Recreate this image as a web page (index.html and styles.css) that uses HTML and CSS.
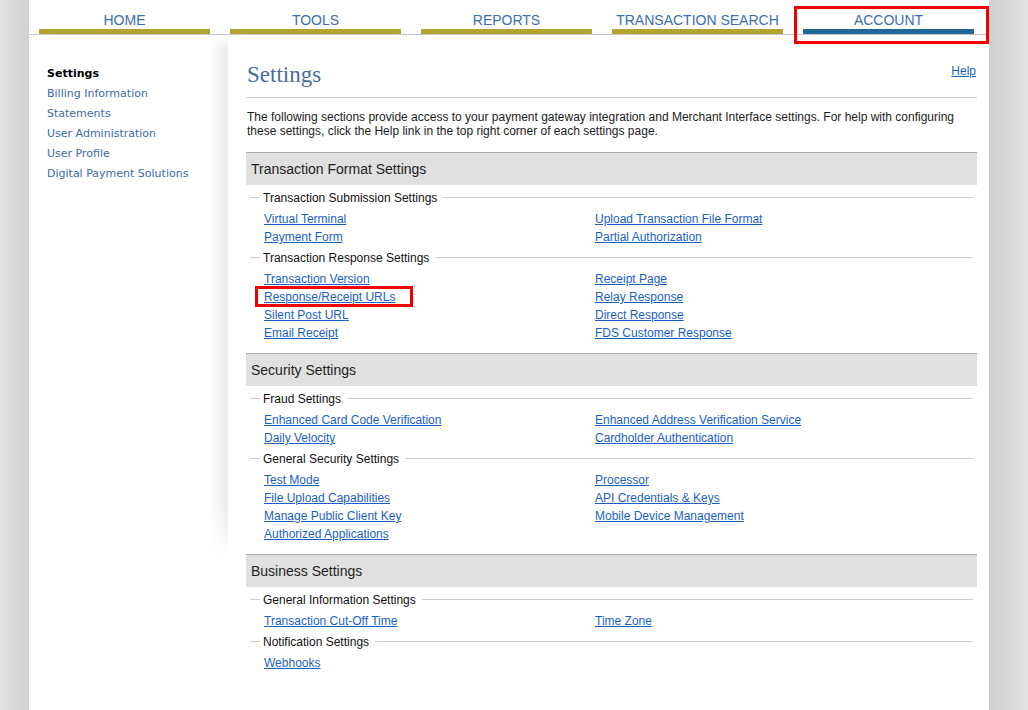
FILE: index.html
```html
<!DOCTYPE html>
<html lang="en">
<head>
<meta charset="utf-8">
<title>Settings</title>
<link rel="stylesheet" href="styles.css">
</head>
<body>
<div class="page">
  <nav class="tabs">
    <a class="tab">HOME</a>
    <a class="tab">TOOLS</a>
    <a class="tab">REPORTS</a>
    <a class="tab">TRANSACTION SEARCH</a>
    <a class="tab tab-active">ACCOUNT</a>
  </nav>
  <div class="layout">
    <aside class="sidebar">
      <ul class="side-list">
        <li class="side-current">Settings</li>
        <li><a>Billing Information</a></li>
        <li><a>Statements</a></li>
        <li><a>User Administration</a></li>
        <li><a>User Profile</a></li>
        <li><a>Digital Payment Solutions</a></li>
      </ul>
    </aside>
    <main class="main">
      <div class="title-row">
        <h1 class="title">Settings</h1>
        <a class="help">Help</a>
      </div>
      <p class="intro">The following sections provide access to your payment gateway integration and Merchant Interface settings. For help with configuring these settings, click the Help link in the top right corner of each settings page.</p>

      <section class="group">
        <h2 class="group-head">Transaction Format Settings</h2>
        <div class="sub"><span class="sub-dash"></span><span class="sub-label">Transaction Submission Settings</span><span class="sub-line"></span></div>
        <div class="links">
          <a>Virtual Terminal</a><a>Upload Transaction File Format</a>
          <a>Payment Form</a><a>Partial Authorization</a>
        </div>
        <div class="sub"><span class="sub-dash"></span><span class="sub-label">Transaction Response Settings</span><span class="sub-line"></span></div>
        <div class="links">
          <a>Transaction Version</a><a>Receipt Page</a>
          <a class="marked">Response/Receipt URLs</a><a>Relay Response</a>
          <a>Silent Post URL</a><a>Direct Response</a>
          <a>Email Receipt</a><a>FDS Customer Response</a>
        </div>
      </section>

      <section class="group">
        <h2 class="group-head">Security Settings</h2>
        <div class="sub"><span class="sub-dash"></span><span class="sub-label">Fraud Settings</span><span class="sub-line"></span></div>
        <div class="links">
          <a>Enhanced Card Code Verification</a><a>Enhanced Address Verification Service</a>
          <a>Daily Velocity</a><a>Cardholder Authentication</a>
        </div>
        <div class="sub"><span class="sub-dash"></span><span class="sub-label">General Security Settings</span><span class="sub-line"></span></div>
        <div class="links">
          <a>Test Mode</a><a>Processor</a>
          <a>File Upload Capabilities</a><a>API Credentials &amp; Keys</a>
          <a>Manage Public Client Key</a><a>Mobile Device Management</a>
          <a>Authorized Applications</a>
        </div>
      </section>

      <section class="group">
        <h2 class="group-head">Business Settings</h2>
        <div class="sub"><span class="sub-dash"></span><span class="sub-label">General Information Settings</span><span class="sub-line"></span></div>
        <div class="links">
          <a>Transaction Cut-Off Time</a><a>Time Zone</a>
        </div>
        <div class="sub"><span class="sub-dash"></span><span class="sub-label">Notification Settings</span><span class="sub-line"></span></div>
        <div class="links">
          <a>Webhooks</a>
        </div>
      </section>
    </main>
  </div>
</div>
</body>
</html>
```

FILE: styles.css
```css
html, body {
  margin: 0;
  padding: 0;
}

body {
  min-height: 710px;
  background: linear-gradient(to right,
    #e1e1e1 0px, #d1d1d1 29px,
    #ffffff 29px, #ffffff 989px,
    #d0d0d0 989px, #e1e1e1 1028px);
  font-family: "Liberation Sans", Arial, sans-serif;
  color: #222;
}

.page {
  width: 960px;
  margin-left: 29px;
  min-height: 710px;
  background: #fff;
}

/* ---------- top tabs ---------- */
.tabs {
  display: flex;
  gap: 20px;
  padding-left: 10px;
  border-bottom: 1px solid #c4c4cc;
  height: 34px;
}

.tab {
  width: 171px;
  box-sizing: border-box;
  padding-top: 12px;
  padding-bottom: 1px;
  line-height: 16px;
  font-size: 14px;
  text-align: center;
  color: #3a6fae;
  border-bottom: 5px solid #b3a431;
  text-decoration: none;
  white-space: nowrap;
}

.tab-active {
  position: relative;
  border-bottom-color: #226797;
}

.tab-active::after {
  content: "";
  position: absolute;
  left: -9px;
  top: 6px;
  width: 195px;
  height: 38px;
  border: 3px solid #f20000;
  box-sizing: border-box;
}

/* ---------- layout ---------- */
.layout {
  display: flex;
}

.sidebar {
  width: 199px;
  flex: none;
  background:
    linear-gradient(to bottom, #fff 0px, rgba(255,255,255,0) 16px, rgba(255,255,255,0) 470px, #fff 522px),
    linear-gradient(to right, #fff 180px, #eaeaed 199px);
  background-repeat: no-repeat;
  background-size: 100% 540px, 100% 540px;
}

.side-list {
  list-style: none;
  margin: 0;
  padding: 29px 0 0 18px;
  font-family: "DejaVu Sans", Verdana, sans-serif;
  font-size: 11px;
  line-height: 20px;
}

.side-list a {
  color: #3b6ca6;
  text-decoration: none;
}

.side-current {
  font-weight: bold;
  color: #000;
}

.main {
  flex: 1;
  padding: 18px 12px 30px 18px;
}

.title-row {
  display: flex;
  justify-content: space-between;
  align-items: flex-start;
  border-bottom: 1px solid #cccccc;
}

.title {
  margin: 0;
  padding-left: 1px;
  font-family: "Liberation Serif", Georgia, serif;
  font-weight: normal;
  font-size: 23px;
  line-height: 44px;
  color: #4a6c9c;
}

.help {
  margin-top: 11px;
  margin-right: 1px;
  font-size: 12px;
  line-height: 14px;
  color: #1a5fc6;
  text-decoration: underline;
}

.intro {
  margin: 12px 0 14px 1px;
  font-size: 12px;
  line-height: 14px;
  color: #1c1c1c;
}

/* ---------- groups ---------- */
.group {
  margin-bottom: 12px;
}

.group-head {
  margin: 0;
  border-top: 1px solid #a9a9a9;
  background: #e0e0e0;
  height: 32px;
  line-height: 32px;
  padding-left: 5px;
  font-size: 14px;
  font-weight: normal;
  color: #1e1e1e;
}

.sub {
  display: flex;
  align-items: center;
  box-sizing: border-box;
  height: 24px;
  padding: 2px 4px 0;
}

.sub-dash {
  width: 10px;
  height: 1px;
  background: #cccccc;
  margin-right: 3px;
  margin-bottom: 2px;
  flex: none;
}

.sub-label {
  font-size: 12px;
  color: #111;
  white-space: nowrap;
}

.sub-line {
  flex: 1;
  height: 1px;
  background: #cccccc;
  margin-left: 6px;
  margin-bottom: 2px;
}

.links {
  display: grid;
  grid-template-columns: 331px 1fr;
  padding-left: 18px;
}

.links a {
  justify-self: start;
  padding-top: 2px;
  font-size: 12px;
  line-height: 16px;
  color: #1a5fc6;
  text-decoration: underline;
  white-space: nowrap;
}

.links a.marked {
  position: relative;
}

.links a.marked::after {
  content: "";
  position: absolute;
  left: -9px;
  top: -1px;
  width: 158px;
  height: 21px;
  border: 3px solid #f20000;
  box-sizing: border-box;
}
```
